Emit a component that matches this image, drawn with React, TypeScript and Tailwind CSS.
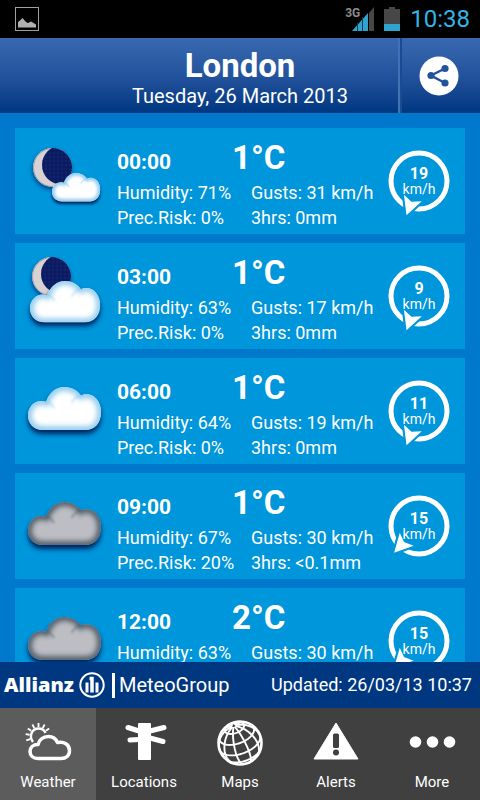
import React from "react";

const FONT = "font-[Roboto,'Noto_Sans',sans-serif]";

type Sky = "moon-small-cloud" | "moon-cloud" | "cloud" | "overcast";

interface Forecast {
  time: string;
  temp: string;
  humidity: string;
  risk: string;
  gusts: string;
  rain: string;
  wind: number;
  angle: number;
  sky: Sky;
}

const forecasts: Forecast[] = [
  { time: "00:00", temp: "1°C", humidity: "71%", risk: "0%", gusts: "31 km/h", rain: "0mm", wind: 19, angle: 20, sky: "moon-small-cloud" },
  { time: "03:00", temp: "1°C", humidity: "63%", risk: "0%", gusts: "17 km/h", rain: "0mm", wind: 9, angle: 20, sky: "moon-cloud" },
  { time: "06:00", temp: "1°C", humidity: "64%", risk: "0%", gusts: "19 km/h", rain: "0mm", wind: 11, angle: 20, sky: "cloud" },
  { time: "09:00", temp: "1°C", humidity: "67%", risk: "20%", gusts: "30 km/h", rain: "<0.1mm", wind: 15, angle: 43, sky: "overcast" },
  { time: "12:00", temp: "2°C", humidity: "63%", risk: "20%", gusts: "30 km/h", rain: "<0.1mm", wind: 15, angle: 43, sky: "overcast" },
];

const CLOUD =
  "M15 43C6 43 0 37 0 28.5C0 20 6 14 13.5 14C15 14 16.500 14.200 18 14.800C21 6 28 0 36.500 0C43.500 0 49.500 3.500 53 8.500C54.500 7.700 56.500 7.300 58.500 7.300C67 7.300 73 15 73 25C73 36 67 43 57 43Z";

function Cloud({ id, transform, gray = false }: { id: string; transform: string; gray?: boolean }) {
  const edge = gray ? "#46525f" : "#7cc2ea";
  return (
    <g transform={transform}>
      <defs>
        <clipPath id={`${id}-clip`}>
          <path d={CLOUD} />
        </clipPath>
        <filter id={`${id}-soft`} x="-30%" y="-30%" width="160%" height="160%">
          <feGaussianBlur stdDeviation="2.500" />
        </filter>
        <filter id={`${id}-crease`} x="-50%" y="-50%" width="200%" height="200%">
          <feGaussianBlur stdDeviation="1.200" />
        </filter>
      </defs>
      <path d={CLOUD} transform="translate(0 4)" fill="#00245e" filter={`url(#${id}-soft)`} />
      <path d={CLOUD} fill={gray ? "#bcbec4" : "#ffffff"} />
      {/* darkening along the rim and where the puffs meet */}
      <g clipPath={`url(#${id}-clip)`} fill="none" stroke={edge}>
        <path d={CLOUD} strokeWidth="8" opacity={gray ? 0.85 : 0.8} filter={`url(#${id}-soft)`} />
        <path d="M17 14C21 15 24 17 26 21M54 8C49 9 45.500 12 43.500 16" strokeWidth="2" opacity="0.4" filter={`url(#${id}-crease)`} />
      </g>
    </g>
  );
}

function Moon({ id, x, y }: { id: string; x: number; y: number }) {
  return (
    <g transform={`translate(${x} ${y})`}>
      <defs>
        <clipPath id={`${id}-moon`}>
          <circle cx="19.500" cy="19.500" r="19.500" />
        </clipPath>
        <filter id={`${id}-shade`} x="-30%" y="-30%" width="160%" height="160%">
          <feGaussianBlur stdDeviation="2" />
        </filter>
        <pattern id={`${id}-dots`} width="4" height="4" patternUnits="userSpaceOnUse">
          <circle cx="1" cy="1" r="0.800" fill="#15277a" />
          <circle cx="3" cy="3" r="0.800" fill="#0a195a" />
        </pattern>
      </defs>
      <circle cx="19" cy="22" r="19.500" fill="#003a80" opacity="0.9" filter={`url(#${id}-shade)`} />
      <circle cx="19.500" cy="19.500" r="19.500" fill="#d8d2d2" />
      <circle cx="19.500" cy="19.500" r="19" fill="none" stroke="#a3a0ad" strokeWidth="1" />
      <g clipPath={`url(#${id}-moon)`}>
        <circle cx="28.500" cy="17" r="19.500" fill="#0c1d63" />
        <circle cx="28.500" cy="17" r="19.500" fill={`url(#${id}-dots)`} />
      </g>
    </g>
  );
}

function SkyIcon({ sky, id }: { sky: Sky; id: string }) {
  return (
    <svg viewBox="0 0 102 106" className="w-[102px] h-[106px] shrink-0" aria-hidden="true">
      {sky === "moon-small-cloud" && (
        <>
          <Moon id={id} x={18} y={20} />
          <Cloud id={id} transform="translate(37 45) scale(0.660)" />
        </>
      )}
      {sky === "moon-cloud" && (
        <>
          <Moon id={id} x={17} y={14} />
          <Cloud id={id} transform="translate(15 38) scale(0.960)" />
        </>
      )}
      {sky === "cloud" && <Cloud id={id} transform="translate(13 29)" />}
      {sky === "overcast" && <Cloud id={id} transform="translate(13 29)" gray />}
    </svg>
  );
}

function WindDial({ speed, angle }: { speed: number; angle: number }) {
  return (
    <div className="relative w-[70px] h-[70px] shrink-0">
      <svg viewBox="-35 -35 70 70" className="w-full h-full" aria-hidden="true">
        <circle r="28" fill="none" stroke="#fff" strokeWidth="5" />
        <g transform={`rotate(${angle})`}>
          <path d="M0 36L-9 18L0 22L9 18Z" fill="#0096db" stroke="#0096db" strokeWidth="5" />
          <path d="M0 36.500L-9.500 18L0 22L9.500 18Z" fill="#fff" />
        </g>
      </svg>
      <div className="absolute inset-0 flex flex-col items-center pt-5">
        <span className="text-base leading-4 font-bold">{speed}</span>
        <span className="text-sm leading-[14px]">km/h</span>
      </div>
    </div>
  );
}

function ForecastCard({ item }: { item: Forecast }) {
  return (
    <li className="h-[106px] shrink-0 bg-[#0096db] flex">
      <SkyIcon sky={item.sky} id={`sky-${item.time.slice(0, 2)}`} />
      <div className="flex-1 pt-2.5 whitespace-nowrap">
        <div className="flex items-baseline h-[42px] leading-10 font-bold">
          <span className="w-[115px] text-[21px]">{item.time}</span>
          <span className="text-[33px]">{item.temp}</span>
        </div>
        <div className="grid grid-cols-[134px_1fr] text-lg leading-[25px]">
          <span>Humidity: {item.humidity}</span>
          <span>Gusts: {item.gusts}</span>
          <span>Prec.Risk: {item.risk}</span>
          <span>3hrs: {item.rain}</span>
        </div>
      </div>
      <div className="pt-[18px] pr-[11px]">
        <WindDial speed={item.wind} angle={item.angle} />
      </div>
    </li>
  );
}

const sunRays = [-110, -82, -55, -28, 0, 28, 55];

function WeatherIcon() {
  return (
    <svg viewBox="0 0 48 48" className="w-12 h-12" fill="none" stroke="#fff" aria-hidden="true">
      {sunRays.map((deg) => (
        <path key={deg} d="M14.500 4V8" strokeWidth="1.800" transform={`rotate(${deg} 14.500 17)`} />
      ))}
      <path d="M9 23C4.500 17 8 9.500 14.500 9.500C18 9.500 20.500 11.500 21.500 14" strokeWidth="2.400" />
      <path
        d="M14 39.500C9 39.500 6 36.500 6 32.500C6 28.500 9 25.500 14 25.500C15 21 19 17.500 24.500 17.500C29 17.500 32 20 33.500 23.500C40 22 45.500 25.500 45.500 31.500C45.500 36.500 42 39.500 37 39.500Z"
        strokeWidth="3.500"
        strokeLinejoin="round"
      />
    </svg>
  );
}

function SignpostIcon() {
  return (
    <svg viewBox="0 0 48 48" className="w-12 h-12" fill="#fff" aria-hidden="true">
      <rect x="18" y="4" width="13" height="37" rx="1" />
      <path d="M8 8.500L19 12M10 21L19 20.500M30 12L44 8.500M30 19L43 22.500" stroke="#fff" strokeWidth="5" strokeLinecap="round" />
    </svg>
  );
}

// point on a globe tilted towards the viewer, in units of its radius
function project(lat: number, lon: number) {
  const rad = Math.PI / 180;
  const x = Math.cos(lat * rad) * Math.sin(lon * rad);
  const z = Math.cos(lat * rad) * Math.cos(lon * rad);
  const y = Math.sin(lat * rad);
  const tilt = 32 * rad;
  return {
    x,
    y: -(y * Math.cos(tilt) - z * Math.sin(tilt)),
    front: y * Math.sin(tilt) + z * Math.cos(tilt) >= 0,
  };
}

function trace(points: [number, number][]) {
  let d = "";
  let pen = false;
  points.forEach(([lat, lon]) => {
    const p = project(lat, lon);
    if (p.front) {
      d += `${pen ? "L" : "M"}${(p.x * 21.5).toFixed(2)} ${(p.y * 21.5).toFixed(2)}`;
    }
    pen = p.front;
  });
  return d;
}

const steps = Array.from({ length: 73 }, (_, i) => i * 5 - 180);
const parallels = [62, 32, 2, -28].map((lat) => trace(steps.map((lon) => [lat, lon])));
const meridians = [-160, -125, -90, -55, -20, 15, 50, 85, 120, 155].map((lon) =>
  trace(Array.from({ length: 35 }, (_, i) => [i * 5 - 85, lon]))
);

function GlobeIcon() {
  return (
    <svg viewBox="-24 -24 48 48" className="w-12 h-12" fill="none" stroke="#fff" aria-hidden="true">
      <circle r="21.500" strokeWidth="2.600" />
      <g transform="rotate(-20)" strokeWidth="1.900">
        {[...parallels, ...meridians].map((d) => (
          <path key={d} d={d} />
        ))}
      </g>
    </svg>
  );
}

function AlertIcon() {
  return (
    <svg viewBox="0 0 48 48" className="w-12 h-12" aria-hidden="true">
      <path d="M24 4L46 40H2Z" fill="#fff" stroke="#fff" strokeWidth="1" strokeLinejoin="round" />
      <rect x="21" y="14.500" width="6" height="14.500" rx="1.500" fill="#404040" />
      <circle cx="24" cy="33.500" r="3" fill="#404040" />
    </svg>
  );
}

function MoreIcon() {
  return (
    <svg viewBox="0 0 48 48" className="w-12 h-12" fill="#fff" aria-hidden="true">
      <circle cx="7.500" cy="23" r="5.800" />
      <circle cx="24.500" cy="23" r="5.800" />
      <circle cx="41.500" cy="23" r="5.800" />
    </svg>
  );
}

const tabs = [
  { label: "Weather", icon: <WeatherIcon /> },
  { label: "Locations", icon: <SignpostIcon /> },
  { label: "Maps", icon: <GlobeIcon /> },
  { label: "Alerts", icon: <AlertIcon /> },
  { label: "More", icon: <MoreIcon /> },
];

function StatusBar() {
  return (
    <div className="h-[38px] shrink-0 bg-black flex items-center pl-[15px] pr-2.5">
      <svg viewBox="0 0 24 24" className="w-6 h-6" aria-hidden="true">
        <rect x="0.500" y="0.500" width="23" height="23" fill="none" stroke="#a0a0a0" />
        <path d="M3 20.500V15L5 13.500L7.500 11L11 15L13 16L16 14.500L21 17.500V20.500Z" fill="#b0b0b0" />
      </svg>
      <div className="ml-auto flex items-center">
        <span className="self-start text-xs leading-3 font-bold text-[#8c8c8c]">3G</span>
        <svg viewBox="0 0 22 24" className="-ml-2 w-[22px] h-6" aria-hidden="true">
          <path d="M17 6L22 0V24H17Z" fill="#474747" />
          <path d="M0 24L16 6V24Z" fill="#2fa4cf" />
          <path d="M5.500 16V24M10.500 10V24" stroke="#0a3f55" strokeWidth="1" />
        </svg>
        <svg viewBox="0 0 16 24" className="ml-2.5 w-4 h-6" aria-hidden="true">
          <path d="M0 2H5V0H11V2H16V24H0Z" fill="#474747" />
          <rect y="17" width="16" height="7" fill="#2fa4cf" />
        </svg>
        <span className="ml-2.5 text-2xl leading-6 text-[#33b5e5]">10:38</span>
      </div>
    </div>
  );
}

export default function App() {
  return (
    <div className={`h-screen flex flex-col overflow-hidden bg-[#0078cb] text-white ${FONT}`}>
      <StatusBar />

      <header className="h-[75px] shrink-0 flex bg-linear-to-b from-[#3869b0] via-[#23539c] to-[#003781]">
        {/* keeps the title centred against the share button */}
        <div className="w-20 shrink-0" />
        <div className="flex-1 text-center">
          <h1 className="pt-2 text-[33px] leading-10 font-bold">London</h1>
          <p className="text-xl leading-5">Tuesday, 26 March 2013</p>
        </div>
        <button
          type="button"
          aria-label="Share"
          className="w-20 shrink-0 flex items-center justify-center pr-1 border-l-2 border-[#1b4a91] shadow-[-2px_0_0_#4272b4]"
        >
          <svg viewBox="0 0 40 40" className="w-10 h-10" aria-hidden="true">
            <circle cx="20" cy="20" r="19.500" fill="#fff" />
            <path d="M26 12.500L12 19.500L26 27" fill="none" stroke="#23539c" strokeWidth="2.500" />
            <circle cx="26" cy="12.500" r="3.600" fill="#23539c" />
            <circle cx="12" cy="19.500" r="3.600" fill="#23539c" />
            <circle cx="26" cy="27" r="3.600" fill="#23539c" />
          </svg>
        </button>
      </header>

      <main className="flex-1 min-h-0 overflow-y-auto [scrollbar-width:none] p-[15px]">
        <ul className="flex flex-col gap-[9px]">
          {forecasts.map((item) => (
            <ForecastCard key={item.time} item={item} />
          ))}
        </ul>
      </main>

      <div className="h-[46px] shrink-0 bg-[#003781] flex items-center pl-1 pr-2 whitespace-nowrap">
        <span className="font-['Noto_Sans',Roboto,sans-serif] font-black text-xl leading-6">Allianz</span>
        <svg viewBox="0 0 26 26" className="ml-[5px] w-[26px] h-[26px]" fill="none" stroke="#fff" aria-hidden="true">
          <circle cx="13" cy="13" r="11.700" strokeWidth="2" />
          <path d="M10.500 6.500H13V20.500" strokeWidth="3.500" />
          <path d="M8 20.500V10.500M18 20.500V10.500" strokeWidth="3" />
        </svg>
        <span className="ml-[7px] w-[3px] h-[25px] bg-white" />
        <span className="ml-1 text-xl">MeteoGroup</span>
        <span className="ml-auto text-lg">Updated: 26/03/13 10:37</span>
      </div>

      <nav className="h-[92px] shrink-0 grid grid-cols-5 bg-[#404040]">
        {tabs.map((tab, i) => (
          <button
            key={tab.label}
            type="button"
            aria-current={i === 0 ? "page" : undefined}
            className={`flex flex-col items-center pt-[11px] gap-1 ${i === 0 ? "bg-[#5c5c5c]" : ""}`}
          >
            {tab.icon}
            <span className="text-[15px] leading-[22px]">{tab.label}</span>
          </button>
        ))}
      </nav>
    </div>
  );
}
